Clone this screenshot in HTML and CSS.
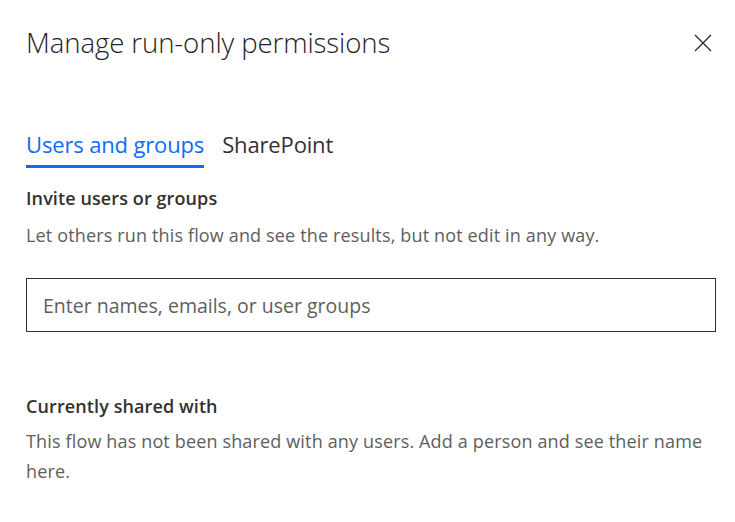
FILE: index.html
```html
<!DOCTYPE html>
<html lang="en">
<head>
<meta charset="utf-8">
<title>Manage run-only permissions</title>
<link rel="stylesheet" href="styles.css">
</head>
<body>
<div class="panel">
  <div class="header">
    <h1 class="title">Manage run-only permissions</h1>
    <button class="close" aria-label="Close">
      <svg width="18" height="18" viewBox="0 0 18 18"><path d="M1 1 L17 17 M17 1 L1 17" stroke="#323130" stroke-width="1.4" fill="none"/></svg>
    </button>
  </div>
  <div class="tabs">
    <div class="tab active">Users and groups</div>
    <div class="tab">SharePoint</div>
  </div>
  <div class="section">
    <div class="label">Invite users or groups</div>
    <div class="desc">Let others run this flow and see the results, but not edit in any way.</div>
  </div>
  <div class="input">Enter names, emails, or user groups</div>
  <div class="section shared">
    <div class="label">Currently shared with</div>
    <div class="desc multi">This flow has not been shared with any users. Add a person and see their name here.</div>
  </div>
</div>
</body>
</html>
```
FILE: styles.css
```css
html, body { margin: 0; padding: 0; background: #fff; }
body { font-family: "Open Sans", "Noto Sans", sans-serif; color: #323130; }
.panel { padding: 0 19px 0 26px; }
.header { display: flex; justify-content: space-between; align-items: flex-start; padding-top: 22px; }
.title { margin: 0; font-size: 27.6px; font-weight: 300; line-height: 40px; color: #252423; letter-spacing: -0.1px; }
.close { border: 0; background: none; padding: 0; margin-top: 12px; margin-right: 4px; width: 18px; height: 18px; display: flex; }
.tabs { display: flex; gap: 18px; margin-top: 67px; }
.tab { font-size: 22px; font-weight: 500; line-height: 30px; padding-bottom: 6px; border-bottom: 3px solid transparent; color: #323130; letter-spacing: -0.15px; }
.tab.active { color: #0f6cf5; border-bottom-color: #0f6cf5; }
.section { margin-top: 17px; }
.label { font-size: 18px; font-weight: 600; line-height: 26px; color: #323130; letter-spacing: 0.1px; }
.desc { font-size: 18px; line-height: 30px; color: #605e5c; margin-top: 9px; letter-spacing: 0.15px; }
.input { margin-top: 28px; height: 52px; border: 1px solid #323130; padding-left: 16px; display: flex; align-items: center; font-size: 19.5px; color: #605e5c; }
.shared { margin-top: 61px; }
.multi { margin-top: 7px; }
```
